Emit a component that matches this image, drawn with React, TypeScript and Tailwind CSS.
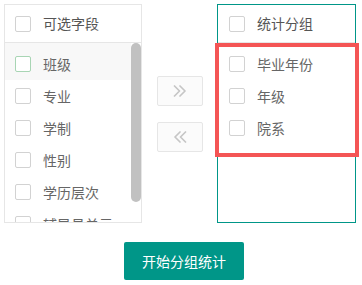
import React from "react";

const font = { fontFamily: '"Noto Sans CJK SC", "Noto Sans", sans-serif' };

function Box({ green = false }: { green?: boolean }) {
  return (
    <span
      className={`block w-4 h-4 shrink-0 rounded-[2px] border bg-white ${
        green ? "border-[#a8d5b4]" : "border-[#d2d2d2]"
      }`}
    />
  );
}

function Row({ label, green = false, pl = "pl-[10px]" }: { label: string; green?: boolean; pl?: string }) {
  return (
    <div className={`flex items-center h-8 ${pl} gap-3 text-[14px] text-[#666] whitespace-nowrap`}>
      <Box green={green} />
      <span>{label}</span>
    </div>
  );
}

function Chevrons({ dir }: { dir: "right" | "left" }) {
  return (
    <svg width="14" height="12" viewBox="0 0 14 12" fill="none" stroke="#c6c6c6" strokeWidth="1.7" strokeLinecap="round" strokeLinejoin="round">
      {dir === "right" ? (
        <>
          <path d="M1.5 1 L6.5 6 L1.5 11" />
          <path d="M7 1 L12 6 L7 11" />
        </>
      ) : (
        <>
          <path d="M12.5 1 L7.5 6 L12.5 11" />
          <path d="M7 1 L2 6 L7 11" />
        </>
      )}
    </svg>
  );
}

export default function App() {
  const left = ["专业", "学制", "性别", "学历层次", "辅导员单元"];
  return (
    <div className="w-[362px] h-[285px] bg-white pt-1 pl-1" style={font}>
      <div className="flex">
        {/* left panel */}
        <div className="w-[138px] h-[219px] border border-[#e6e6e6] flex flex-col overflow-hidden">
          <div className="h-[38px] shrink-0 border-b border-[#e6e6e6] flex items-center pl-[10px] gap-3 text-[14px] text-[#555]">
            <Box />
            <span>可选字段</span>
          </div>
          <div className="flex flex-1 min-h-0">
            <div className="flex-1 overflow-hidden">
              <div className="bg-[#f8f8f8] pt-[5px]">
                <Row label="班级" green />
              </div>
              {left.map((l) => (
                <Row key={l} label={l} />
              ))}
            </div>
            <div className="w-[10px] shrink-0">
              <div className="h-[159px] bg-[#c1c1c1] rounded-[5px]" />
            </div>
          </div>
        </div>

        {/* middle buttons */}
        <div className="w-[75px] flex flex-col items-center pt-[72px] gap-4">
          <div className="w-[46px] h-[30px] border border-[#e6e6e6] bg-[#fbfbfb] rounded-[2px] flex items-center justify-center">
            <Chevrons dir="right" />
          </div>
          <div className="w-[46px] h-[30px] border border-[#e6e6e6] bg-[#fbfbfb] rounded-[2px] flex items-center justify-center">
            <Chevrons dir="left" />
          </div>
        </div>

        {/* right panel */}
        <div className="relative w-[139px] h-[219px] border border-[#009688] flex flex-col">
          <div className="h-[38px] shrink-0 border-b border-[#e6e6e6] flex items-center pl-[11px] gap-3 text-[14px] text-[#555]">
            <Box />
            <span>统计分组</span>
          </div>
          <div className="pt-[5px] pl-px">
            <Row label="毕业年份" />
            <Row label="年级" />
            <Row label="院系" />
          </div>
          <div className="absolute left-[-3px] top-[38px] w-[144px] h-[114px] border-4 border-[#f45555]" />
        </div>
      </div>

      <div className="pl-[120px] pt-[19px]">
        <button className="w-[120px] h-[38px] bg-[#009688] text-white text-[14px] rounded-[2px]">
          开始分组统计
        </button>
      </div>
    </div>
  );
}
